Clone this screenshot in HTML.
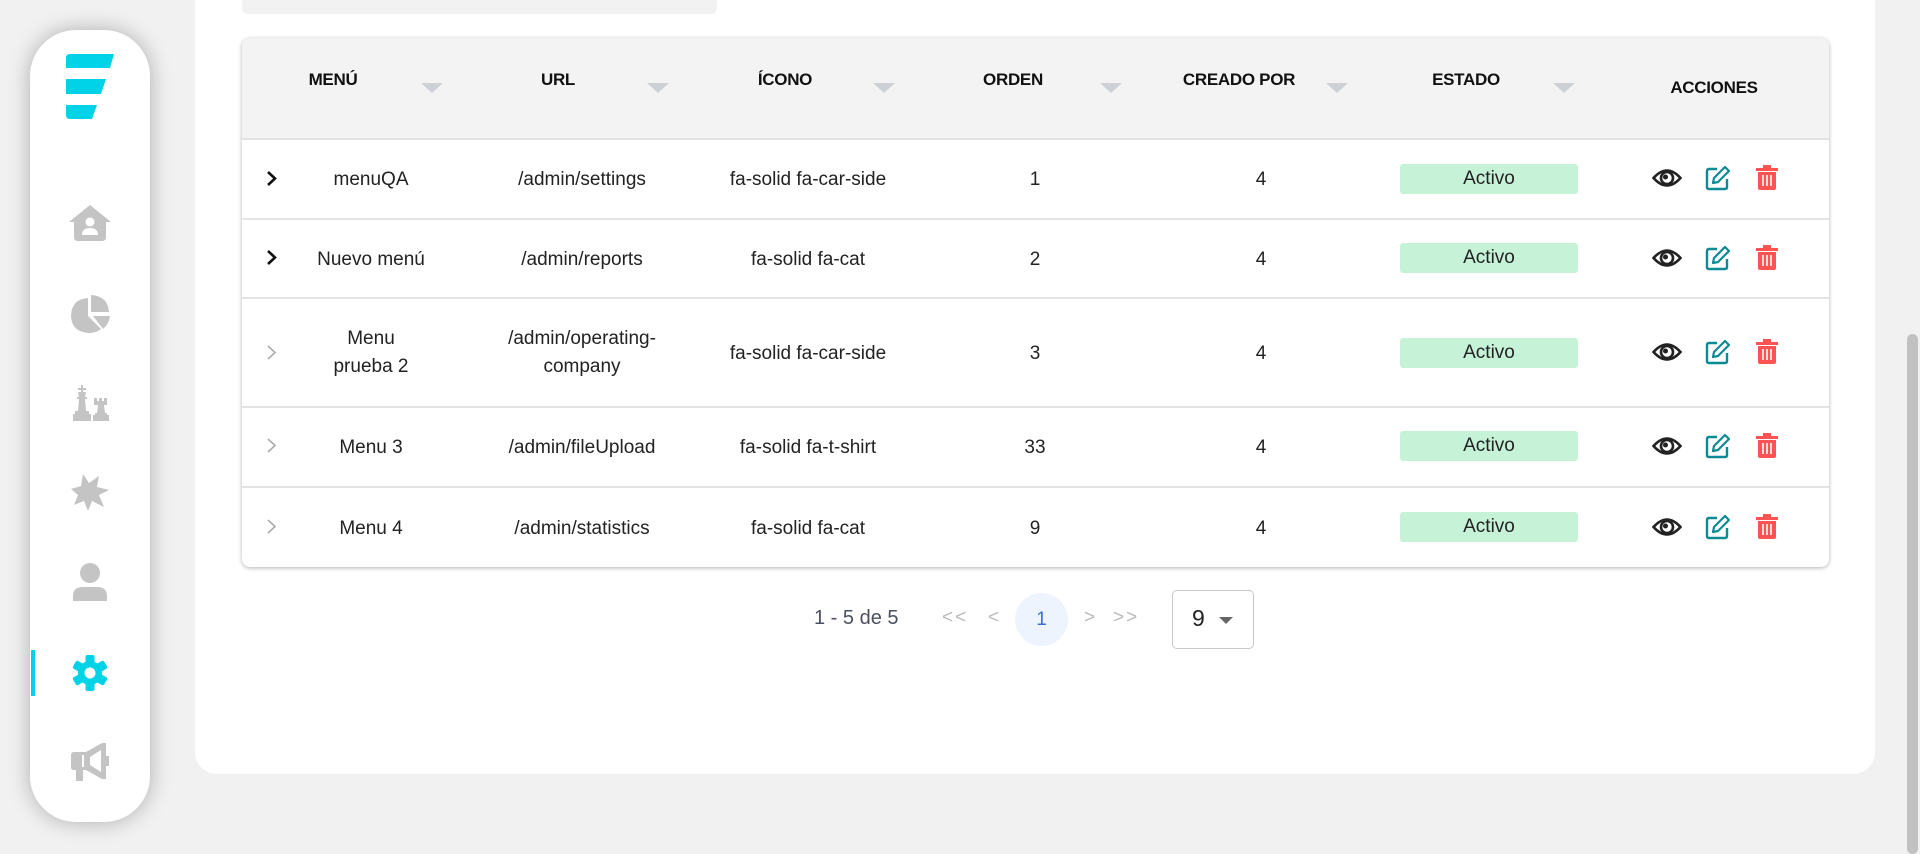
<!DOCTYPE html>
<html><head><meta charset="utf-8"><style>
*{box-sizing:border-box;margin:0;padding:0}
body{width:1920px;height:834px;background:#f1f1f1;font-family:"Liberation Sans",Arial,sans-serif;position:relative;overflow:hidden;color:#222}
.abs{position:absolute}
.side{left:30px;top:30px;width:120px;height:792px;background:#fff;border-radius:46px;box-shadow:0 0 22px rgba(0,0,0,.28)}
.card{left:195px;top:-30px;width:1680px;height:804px;background:#fff;border-radius:22px}
.search{left:242px;top:-10px;width:475px;height:24px;background:#f2f2f2;border-radius:6px}
.table{left:242px;top:38px;width:1587px;height:529px;background:#fff;border-radius:8px;box-shadow:0 1px 4px rgba(0,0,0,.3);overflow:hidden}
.thead{left:0;top:0;width:1587px;height:102px;background:#f3f3f3;border-bottom:2px solid #e2e2e2}
.th{font-weight:bold;font-size:17px;color:#111;transform:translateX(-50%);white-space:nowrap;letter-spacing:-0.3px}
.tri{width:0;height:0;border-left:11px solid transparent;border-right:11px solid transparent;border-top:10px solid #cdd1d6;transform:translateX(-50%)}
.line{left:0;width:1587px;height:2px;background:#e4e4e4}
.td{font-size:19px;color:#222;transform:translate(-50%,-50%);text-align:center;white-space:nowrap;line-height:28px}
.badge{width:178px;height:30px;background:#c6f3d8;border-radius:3px;font-size:19px;text-align:center;line-height:30px;color:#222}
.pg{font-size:19px;color:#555}
</style></head><body>
<div class="abs side"></div>
<svg class="abs" style="left:66px;top:54px" width="48" height="66" viewBox="0 0 48 66">
<path d="M4 0H48L44 14H0V4Q0 0 4 0Z" fill="#00d3e8"/>
<path d="M0 25H40L35 40H0Z" fill="#00d3e8"/>
<path d="M0 51H31L26 65H4Q0 65 0 61Z" fill="#00d3e8"/>
</svg>
<svg class="abs" style="left:69px;top:205px" width="42" height="36" viewBox="0 0 42 36"><path d="M21 0L42 17H37V32Q37 36 33 36H9Q5 36 5 32V17H0Z" fill="#c4c4c4"/><circle cx="21" cy="17" r="4.5" fill="#fff"/><path d="M13 30Q13 23 21 23Q29 23 29 30Z" fill="#fff"/></svg>
<svg class="abs" style="left:71px;top:295px" width="40" height="38" viewBox="0 0 40 38"><path d="M17 3V21L30 34Q25 38 18 38Q0 37 0 20Q1 4 17 3Z" fill="#c4c4c4"/><path d="M20 0Q37 1 38 17H20Z" fill="#c4c4c4"/><path d="M22 21H39Q38 29 32 34Z" fill="#c4c4c4"/></svg>
<svg class="abs" style="left:72px;top:385px" width="38" height="36" viewBox="0 0 38 36"><path d="M9 0H11V3H14V5H11V7H14L13 12H15V14H13L14 26H17V29H19V36H1V29H3V26H6L7 14H5V12H7L6 7H9V5H6V3H9Z" fill="#c4c4c4"/><path d="M22 13H25V16H27V13H30V16H32V13H35V20H32L33 28H35V30H37V36H21V30H23V28H25L26 20H22Z" fill="#c4c4c4"/></svg>
<svg class="abs" style="left:71px;top:474px" width="38" height="37" viewBox="0 0 38 37"><path d="M12 0L18 9L28 2L26 13L38 16L28 21L33 33L21 27L17 37L13 27L3 31L7 21L0 15L10 12Z" fill="#c4c4c4"/></svg>
<svg class="abs" style="left:73px;top:563px" width="34" height="38" viewBox="0 0 34 38"><circle cx="17" cy="10" r="10" fill="#c4c4c4"/><path d="M0 38V33Q0 24 10 24H24Q34 24 34 33V38Z" fill="#c4c4c4"/></svg>
<div class="abs" style="left:31px;top:650px;width:4px;height:46px;background:#00d3e8"></div>
<svg class="abs" style="left:72px;top:655px" width="36" height="36" viewBox="-18 -18 36 36"><g fill="#00d3e8"><circle r="12"/><rect x="-4.5" y="-18" width="9" height="36" rx="2"/><rect x="-4.5" y="-18" width="9" height="36" rx="2" transform="rotate(60)"/><rect x="-4.5" y="-18" width="9" height="36" rx="2" transform="rotate(120)"/></g><circle r="5.5" fill="#fff"/></svg>
<svg class="abs" style="left:71px;top:743px" width="38" height="38" viewBox="0 0 38 38"><path d="M0 12Q0 9 3 9H15L31 0H35V36H31L15 27H12V38H5V27H3Q0 27 0 24Z" fill="#c4c4c4"/><path d="M12 12V24" stroke="#fff" stroke-width="2"/><path d="M19 14L30 7V29L19 22Z" fill="#fff"/><rect x="35" y="13" width="3" height="10" fill="#c4c4c4"/></svg>

<div class="abs card"></div>
<div class="abs search"></div>
<div class="abs table">
 <div class="abs thead"></div>
 <div class="abs th" style="left:91px;top:32px">MENÚ</div>
 <div class="abs th" style="left:316px;top:32px">URL</div>
 <div class="abs th" style="left:543px;top:32px">ÍCONO</div>
 <div class="abs th" style="left:771px;top:32px">ORDEN</div>
 <div class="abs th" style="left:997px;top:32px">CREADO POR</div>
 <div class="abs th" style="left:1224px;top:32px">ESTADO</div>
 <div class="abs th" style="left:1472px;top:40px">ACCIONES</div>
 <div class="abs tri" style="left:190px;top:45px"></div>
 <div class="abs tri" style="left:416px;top:45px"></div>
 <div class="abs tri" style="left:642px;top:45px"></div>
 <div class="abs tri" style="left:869px;top:45px"></div>
 <div class="abs tri" style="left:1095px;top:45px"></div>
 <div class="abs tri" style="left:1322px;top:45px"></div>
 <div class="abs line" style="top:180px"></div>
 <div class="abs line" style="top:259px"></div>
 <div class="abs line" style="top:368px"></div>
 <div class="abs line" style="top:448px"></div>
</div>

<svg class="abs" style="left:266px;top:170px" width="12" height="17" viewBox="0 0 12 17"><path d="M2 2L9 8.5L2 15" stroke="#111" stroke-width="2.6" fill="none"/></svg>
<svg class="abs" style="left:266px;top:249px" width="12" height="17" viewBox="0 0 12 17"><path d="M2 2L9 8.5L2 15" stroke="#111" stroke-width="2.6" fill="none"/></svg>
<svg class="abs" style="left:266px;top:344px" width="12" height="17" viewBox="0 0 12 17"><path d="M2 2L9 8.5L2 15" stroke="#aaa" stroke-width="1.6" fill="none"/></svg>
<svg class="abs" style="left:266px;top:437px" width="12" height="17" viewBox="0 0 12 17"><path d="M2 2L9 8.5L2 15" stroke="#aaa" stroke-width="1.6" fill="none"/></svg>
<svg class="abs" style="left:266px;top:518px" width="12" height="17" viewBox="0 0 12 17"><path d="M2 2L9 8.5L2 15" stroke="#aaa" stroke-width="1.6" fill="none"/></svg>

<div class="abs td" style="left:371px;top:180px">menuQA</div>
<div class="abs td" style="left:582px;top:180px">/admin/settings</div>
<div class="abs td" style="left:808px;top:180px">fa-solid fa-car-side</div>
<div class="abs td" style="left:1035px;top:180px">1</div>
<div class="abs td" style="left:1261px;top:180px">4</div>
<div class="abs badge" style="left:1400px;top:164px">Activo</div>
<div class="abs td" style="left:371px;top:260px">Nuevo menú</div>
<div class="abs td" style="left:582px;top:260px">/admin/reports</div>
<div class="abs td" style="left:808px;top:260px">fa-solid fa-cat</div>
<div class="abs td" style="left:1035px;top:260px">2</div>
<div class="abs td" style="left:1261px;top:260px">4</div>
<div class="abs badge" style="left:1400px;top:243px">Activo</div>
<div class="abs td" style="left:371px;top:353px">Menu<br>prueba 2</div>
<div class="abs td" style="left:582px;top:353px">/admin/operating-<br>company</div>
<div class="abs td" style="left:808px;top:354px">fa-solid fa-car-side</div>
<div class="abs td" style="left:1035px;top:354px">3</div>
<div class="abs td" style="left:1261px;top:354px">4</div>
<div class="abs badge" style="left:1400px;top:338px">Activo</div>
<div class="abs td" style="left:371px;top:448px">Menu 3</div>
<div class="abs td" style="left:582px;top:448px">/admin/fileUpload</div>
<div class="abs td" style="left:808px;top:448px">fa-solid fa-t-shirt</div>
<div class="abs td" style="left:1035px;top:448px">33</div>
<div class="abs td" style="left:1261px;top:448px">4</div>
<div class="abs badge" style="left:1400px;top:431px">Activo</div>
<div class="abs td" style="left:371px;top:529px">Menu 4</div>
<div class="abs td" style="left:582px;top:529px">/admin/statistics</div>
<div class="abs td" style="left:808px;top:529px">fa-solid fa-cat</div>
<div class="abs td" style="left:1035px;top:529px">9</div>
<div class="abs td" style="left:1261px;top:529px">4</div>
<div class="abs badge" style="left:1400px;top:512px">Activo</div>

<svg width="0" height="0" style="position:absolute"><defs>
<g id="eye"><path d="M1.5 13Q15 -2 28.5 13Q15 28 1.5 13Z" fill="none" stroke="#222" stroke-width="2.6"/><circle cx="15" cy="13" r="6" fill="none" stroke="#222" stroke-width="2.6"/><circle cx="13.5" cy="12" r="2.5" fill="#222"/></g>
<g id="edit"><path d="M12 4H4Q2 4 2 6V22Q2 24 4 24H20Q22 24 22 22V14" fill="none" stroke="#0e8a94" stroke-width="2.4"/><path d="M20 2L24 6L13 17L8 18L9 13Z" fill="none" stroke="#0e8a94" stroke-width="2.2" stroke-linejoin="round"/></g>
<g id="trash"><rect x="0" y="3" width="22" height="3" fill="#ff5252"/><rect x="7" y="0" width="8" height="3" fill="#ff5252"/><path d="M2 7H20V23Q20 25 18 25H4Q2 25 2 23Z" fill="#ff5252"/><path d="M7 10V21M11 10V21M15 10V21" stroke="#fff" stroke-width="1.6"/></g>
</defs></svg>
<svg class="abs" style="left:1652px;top:165px" width="30" height="26"><use href="#eye"/></svg>
<svg class="abs" style="left:1705px;top:165px" width="26" height="26"><use href="#edit"/></svg>
<svg class="abs" style="left:1756px;top:165px" width="22" height="26"><use href="#trash"/></svg>
<svg class="abs" style="left:1652px;top:245px" width="30" height="26"><use href="#eye"/></svg>
<svg class="abs" style="left:1705px;top:245px" width="26" height="26"><use href="#edit"/></svg>
<svg class="abs" style="left:1756px;top:245px" width="22" height="26"><use href="#trash"/></svg>
<svg class="abs" style="left:1652px;top:339px" width="30" height="26"><use href="#eye"/></svg>
<svg class="abs" style="left:1705px;top:339px" width="26" height="26"><use href="#edit"/></svg>
<svg class="abs" style="left:1756px;top:339px" width="22" height="26"><use href="#trash"/></svg>
<svg class="abs" style="left:1652px;top:433px" width="30" height="26"><use href="#eye"/></svg>
<svg class="abs" style="left:1705px;top:433px" width="26" height="26"><use href="#edit"/></svg>
<svg class="abs" style="left:1756px;top:433px" width="22" height="26"><use href="#trash"/></svg>
<svg class="abs" style="left:1652px;top:514px" width="30" height="26"><use href="#eye"/></svg>
<svg class="abs" style="left:1705px;top:514px" width="26" height="26"><use href="#edit"/></svg>
<svg class="abs" style="left:1756px;top:514px" width="22" height="26"><use href="#trash"/></svg>

<div class="abs pg" style="left:814px;top:607px;color:#4a5060;font-size:20px">1 - 5 de 5</div>
<div class="abs pg" style="left:942px;top:607px;color:#bbb;letter-spacing:2px">&lt;&lt;</div>
<div class="abs pg" style="left:988px;top:607px;color:#bbb">&lt;</div>
<div class="abs" style="left:1015px;top:593px;width:53px;height:53px;border-radius:50%;background:#eef4fe;color:#3a6fd8;font-size:19px;text-align:center;line-height:53px">1</div>
<div class="abs pg" style="left:1084px;top:607px;color:#bbb">&gt;</div>
<div class="abs pg" style="left:1113px;top:607px;color:#bbb;letter-spacing:2px">&gt;&gt;</div>
<div class="abs" style="left:1172px;top:590px;width:82px;height:59px;border:1px solid #c8c8c8;border-radius:5px"></div>
<div class="abs" style="left:1192px;top:605px;font-size:23px;color:#222">9</div>
<div class="abs" style="left:1219px;top:617px;width:0;height:0;border-left:7px solid transparent;border-right:7px solid transparent;border-top:7px solid #666"></div>

<div class="abs" style="left:1907px;top:334px;width:11px;height:520px;background:#c1c1c1;border-radius:6px"></div>
</body></html>
